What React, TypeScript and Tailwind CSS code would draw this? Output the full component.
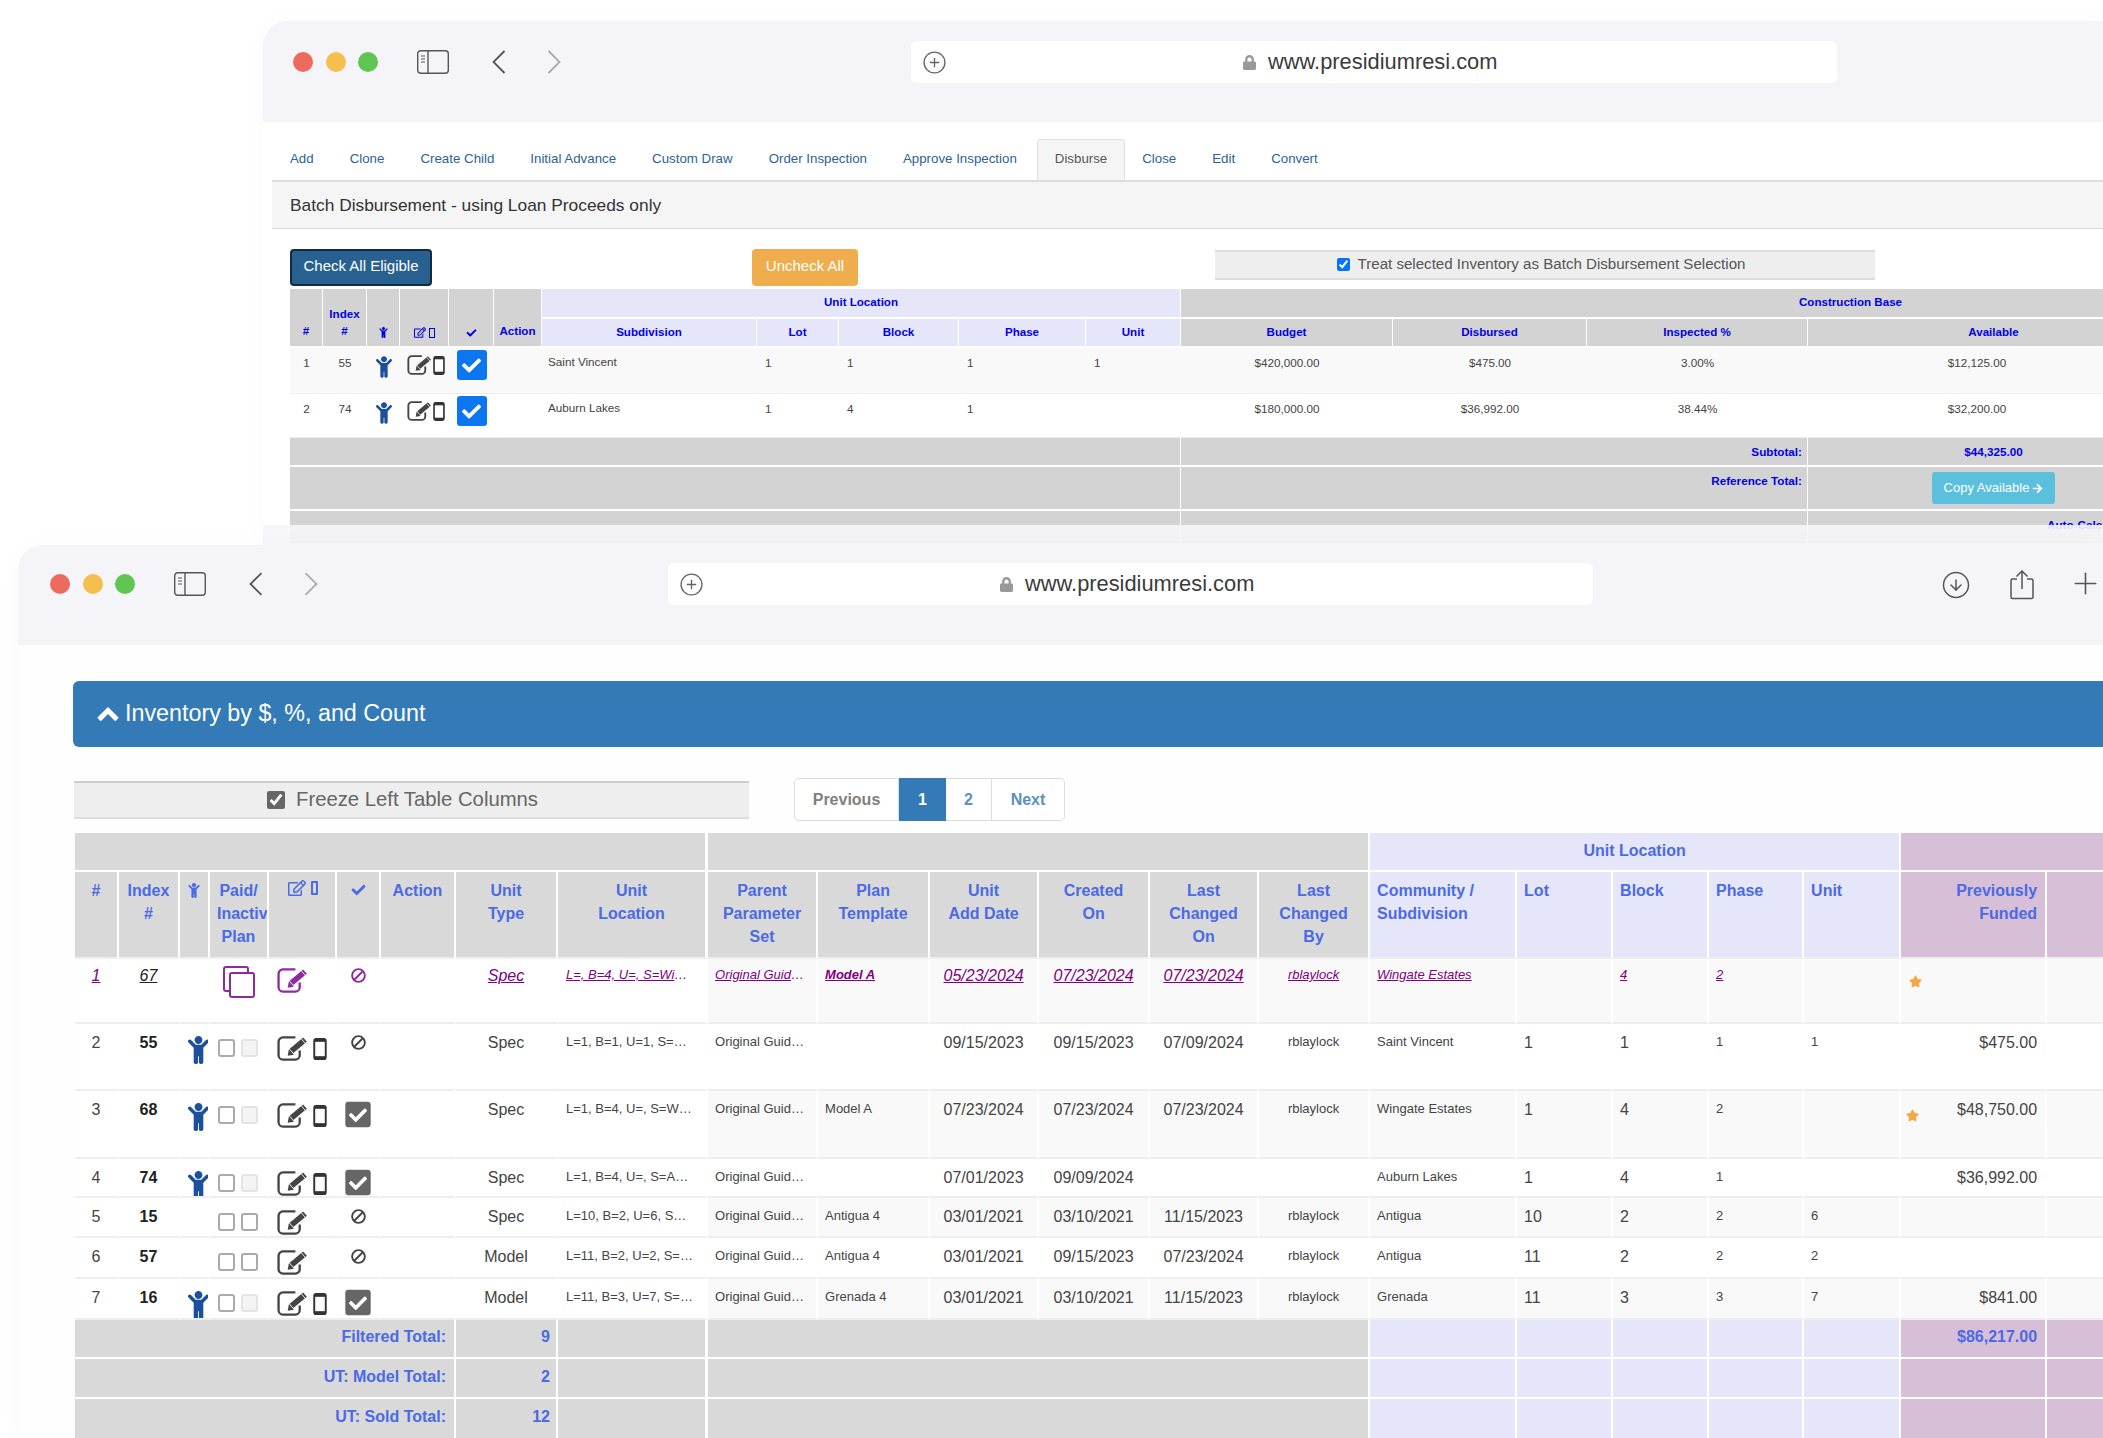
import React from "react";
import { FaArrowRight, FaBan, FaCheck, FaCheckSquare, FaChild, FaLock, FaRegEdit, FaStar } from "react-icons/fa";
import { CircleArrowDown, CirclePlus, Plus } from "lucide-react";

function Mobile({ className }: { className?: string }) {
  return (
    <svg viewBox="0 0 14 23" className={className}>
      <rect x="1" y="1" width="12" height="21" rx="2" fill="#fff" stroke="currentColor" strokeWidth="2" />
      <rect x="1" y="1" width="12" height="3" fill="currentColor" />
      <rect x="1" y="19" width="12" height="3" fill="currentColor" />
    </svg>
  );
}

function EditIcon({ className }: { className?: string }) {
  return (
    <svg viewBox="0 0 32 26" className={className} fill="none">
      <path d="M19 1.500H6A4.500 4.500 0 0 0 1.500 6v14A4.500 4.500 0 0 0 6 24.500h13a4.500 4.500 0 0 0 4.500-4.500v-5" stroke="currentColor" strokeWidth="2.400" />
      <path d="M15 15.500 29 3.800" stroke="currentColor" strokeWidth="6" />
      <path d="M25.500 3.200l3.800 4.600" stroke="#fff" strokeWidth="0.900" />
      <path d="M11 20.500l1.300-7 5.200 6z" fill="currentColor" />
    </svg>
  );
}

function CopyIcon({ className }: { className?: string }) {
  return (
    <svg viewBox="0 0 32 32" className={className} fill="none" stroke="currentColor" strokeWidth="2">
      <path d="M7 25H3a2 2 0 0 1-2-2V3a2 2 0 0 1 2-2h20a2 2 0 0 1 2 2v4" />
      <rect x="7" y="7" width="24" height="24" rx="2" />
    </svg>
  );
}

function Chrome({ front }: { front?: boolean }) {
  return (
    <div className={front ? "flex h-[100px] items-start rounded-tl-[24px] bg-[#f5f5f9] pl-[32px]" : "flex h-[101px] items-start rounded-tl-[24px] bg-[#f5f5f9] pl-[30px] pt-[2px]"}>
      <div className="mt-[29px] flex gap-[12.500px]">
        <span className="h-[20px] w-[20px] rounded-full bg-[#ec6a5e]" />
        <span className="h-[20px] w-[20px] rounded-full bg-[#f4bf4f]" />
        <span className="h-[20px] w-[20px] rounded-full bg-[#61c554]" />
      </div>
      <svg viewBox="0 0 32 24" className="ml-[39px] mt-[27px] h-[24px] w-[32px] text-[#555]" fill="none" stroke="currentColor">
        <rect x="0.7" y="0.7" width="30.6" height="22.6" rx="3" strokeWidth="1.4" />
        <path d="M11 1v22" strokeWidth="1.4" />
        <path d="M4 6h4M4 9h4M4 12h4" strokeWidth="1.2" />
      </svg>
      <svg viewBox="0 0 14 24" className="ml-[43px] mt-[27px] h-[24px] w-[14px] text-[#555]" fill="none" stroke="currentColor" strokeWidth="1.8">
        <path d="M12.5 1 1.5 12l11 11" />
      </svg>
      <svg viewBox="0 0 14 24" className="ml-[41px] mt-[27px] h-[24px] w-[14px] text-[#aaa]" fill="none" stroke="currentColor" strokeWidth="1.8">
        <path d="M1.5 1l11 11-11 11" />
      </svg>
      <div className="ml-[350px] mt-[18px] flex h-[42px] w-[926px] items-center rounded-[6px] bg-white pl-[11px]">
        <CirclePlus className="h-[25px] w-[25px] text-[#666]" strokeWidth={1.3} />
        <FaLock className="ml-[296px] h-[15px] w-[13px] text-[#999]" />
        <span className="ml-[12px] text-[21.850px] leading-[28px] text-[#3b3b3b]">www.presidiumresi.com</span>
      </div>
      {front && (
        <div className="flex items-center">
          <CircleArrowDown className="ml-[348px] mt-[23px] h-[30px] w-[30px] text-[#555]" strokeWidth={1.2} />
          <svg viewBox="0 0 24 30" className="ml-[39px] mt-[24px] h-[30px] w-[24px] text-[#555]" fill="none" stroke="currentColor" strokeWidth="1.500">
            <path d="M7 9H2.500A1.500 1.500 0 0 0 1 10.500V27a1.500 1.500 0 0 0 1.500 1.500h19A1.500 1.500 0 0 0 23 27V10.500A1.500 1.500 0 0 0 21.500 9H17M12 19V1.500M6.500 6.500 12 1l5.500 5.500" />
          </svg>
          <Plus className="ml-[34px] mt-[21px] h-[35px] w-[35px] text-[#555]" strokeWidth={1.1} />
        </div>
      )}
    </div>
  );
}

const tabs = ["Add", "Clone", "Create Child", "Initial Advance", "Custom Draw", "Order Inspection", "Approve Inspection", "Disburse", "Close", "Edit", "Convert"];

const backTh = "border-b-2 border-r border-white bg-[#d3d3d3] p-0 text-center text-[11.6px] font-bold text-[#0000e6]";
const backThL = "border-b-2 border-r border-white bg-[#e6e6fa] p-0 text-center text-[11.6px] font-bold text-[#0000e6]";
const backTd = "border-b border-[#eeeeee] p-0 align-top text-[11.7px] text-[#444]";

function BackIcons() {
  return (
    <>
      <td className={backTd}>
        <div className="flex justify-center pt-[8px]"><FaChild className="h-[22px] w-[16px] text-[#1c4f9c]" /></div>
      </td>
      <td className={backTd}>
        <div className="flex items-start gap-[1px] pl-[7px] pt-[7px]">
          <EditIcon className="h-[20px] w-[25px] text-[#444]" />
          <Mobile className="mt-[1px] h-[19px] w-[12px] text-[#333]" />
        </div>
      </td>
      <td className={backTd}>
        <div className="flex justify-center pt-[2px]">
          <span className="flex h-[30px] w-[30px] items-center justify-center rounded-[3px] bg-[#0b76ef]"><FaCheck className="h-[19px] w-[19px] text-white" /></span>
        </div>
      </td>
      <td className={backTd} />
    </>
  );
}

function BackRow({ n, idx, sub, lot, block, phase, unit, budget, disb, insp, avail, stripe, h }: { n: string; idx: string; sub: string; lot: string; block: string; phase: string; unit: string; budget: string; disb: string; insp: string; avail: string; stripe?: boolean; h: string }) {
  const row = stripe ? "bg-[#f9f9f9]" : "bg-white";
  return (
    <tr className={`${row} ${h}`}>
      <td className={`${backTd} pt-[6px] text-center`}>{n}</td>
      <td className={`${backTd} pt-[6px] text-center`}>{idx}</td>
      <BackIcons />
      <td className={`${backTd} pl-[6px] pt-[5px] text-[9.6px]`}>{sub}</td>
      <td className={`${backTd} pl-[8px] pt-[6px]`}>{lot}</td>
      <td className={`${backTd} pl-[8px] pt-[6px]`}>{block}</td>
      <td className={`${backTd} pl-[8px] pt-[6px]`}>{phase}</td>
      <td className={`${backTd} pl-[8px] pt-[6px]`}>{unit}</td>
      <td className={`${backTd} pt-[6px] text-center`}>{budget}</td>
      <td className={`${backTd} pt-[6px] text-center`}>{disb}</td>
      <td className={`${backTd} pt-[6px] text-center`}>{insp}</td>
      <td className={`${backTd} pr-[34px] pt-[6px] text-center`}>{avail}</td>
      <td className={backTd} />
    </tr>
  );
}

const backTotal = "border-b-2 border-r border-white bg-[#d3d3d3] p-0 align-top text-[11.7px] font-bold text-[#0000e6]";

function BackWindow() {
  return (
    <section className="absolute left-[263px] top-[21px] h-[524px] w-[1840px] overflow-hidden rounded-tl-[24px] bg-white shadow-[0_0_24px_rgba(0,0,0,0.025)]">
      <Chrome />
      <nav className="ml-[9px] flex h-[60px] items-end border-b-2 border-[#dddddd] pt-[17px]">
        {tabs.map((t) => (
          <span
            key={t}
            className={
              t === "Disburse"
                ? "ml-[2px] mr-[-1px] flex h-[41px] items-center rounded-t-[4px] border border-b-0 border-[#e2e2e2] bg-[#f5f5f5] px-[17px] pb-[2px] text-[13.3px] text-[#555]"
                : "flex h-[41px] items-center px-[18px] pb-[2px] text-[13.3px] text-[#2f6294]"
            }
          >
            {t}
          </span>
        ))}
      </nav>
      <div className="ml-[9px] flex h-[47px] items-center border-b border-[#dddddd] bg-[#f5f5f5] pl-[18px] text-[17.350px] text-[#333]">
        Batch Disbursement - using Loan Proceeds only
      </div>
      <div className="ml-[27px] mt-[20px] flex items-start">
        <button className="h-[37px] w-[142px] rounded-[4px] border-2 border-[#122b40] bg-[#286090] pb-[2px] text-[15px] text-white">Check All Eligible</button>
        <button className="ml-[320px] h-[37px] w-[106px] rounded-[4px] bg-[#f0ad4e] pb-[2px] text-[15px] text-[#fff]">Uncheck All</button>
        <label className="ml-[357px] mt-[1px] flex h-[30px] w-[660px] items-center justify-center gap-[8px] border-y-2 border-[#dddddd] bg-[#eeeeee] pb-[2px] pr-[8px] text-[15.100px] text-[#555]">
          <input type="checkbox" defaultChecked className="h-[13px] w-[13px]" />
          Treat selected Inventory as Batch Disbursement Selection
        </label>
      </div>
      <table className="ml-[27px] mt-[3px] w-[1900px] table-fixed border-separate border-spacing-0">
        <colgroup>
          <col className="w-[33px]" /><col className="w-[44px]" /><col className="w-[33px]" /><col className="w-[49px]" /><col className="w-[45px]" /><col className="w-[48px]" />
          <col className="w-[215px]" /><col className="w-[82px]" /><col className="w-[120px]" /><col className="w-[127px]" /><col className="w-[95px]" />
          <col className="w-[212px]" /><col className="w-[194px]" /><col className="w-[221px]" /><col className="w-[372px]" /><col className="w-[341px]" />
        </colgroup>
        <thead>
          <tr className="h-[30px]">
            <th rowSpan={2} className={`${backTh} pb-[7px] align-bottom`}>#</th>
            <th rowSpan={2} className={`${backTh} pb-[7px] align-bottom leading-[17px]`}>Index<br />#</th>
            <th rowSpan={2} className={`${backTh} pb-[8px] align-bottom`}><FaChild className="mx-auto h-[11px] w-[9px]" /></th>
            <th rowSpan={2} className={`${backTh} pb-[8px] align-bottom`}>
              <span className="flex items-center justify-center gap-[3px]"><FaRegEdit className="h-[11px] w-[12px]" /><span className="h-[10px] w-[6px] border border-[#0000e6]" /></span>
            </th>
            <th rowSpan={2} className={`${backTh} pb-[8px] align-bottom`}><FaCheck className="mx-auto h-[10px] w-[11px]" /></th>
            <th rowSpan={2} className={`${backTh} pb-[7px] align-bottom`}>Action</th>
            <th colSpan={5} className={`${backThL} pb-[3px]`}>Unit Location</th>
            <th colSpan={5} className={`${backTh} pb-[3px]`}>Construction Base</th>
          </tr>
          <tr className="h-[29px]">
            <th className={`${backThL} pb-[2px]`}>Subdivision</th>
            <th className={`${backThL} pb-[2px]`}>Lot</th>
            <th className={`${backThL} pb-[2px]`}>Block</th>
            <th className={`${backThL} pb-[2px]`}>Phase</th>
            <th className={`${backThL} pb-[2px]`}>Unit</th>
            <th className={`${backTh} pb-[2px]`}>Budget</th>
            <th className={`${backTh} pb-[2px]`}>Disbursed</th>
            <th className={`${backTh} pb-[2px]`}>Inspected %</th>
            <th className={`${backTh} pb-[2px]`}>Available</th>
            <th className={backTh} />
          </tr>
        </thead>
        <tbody>
          <BackRow stripe h="h-[46px]" n="1" idx="55" sub="Saint Vincent" lot="1" block="1" phase="1" unit="1" budget="$420,000.00" disb="$475.00" insp="3.00%" avail="$12,125.00" />
          <BackRow h="h-[44px]" n="2" idx="74" sub="Auburn Lakes" lot="1" block="4" phase="1" unit="" budget="$180,000.00" disb="$36,992.00" insp="38.44%" avail="$32,200.00" />
          <tr className="h-[29px]">
            <td colSpan={11} className={backTotal} />
            <td colSpan={3} className={`${backTotal} pr-[5px] pt-[5px] text-right`}>Subtotal:</td>
            <td className={`${backTotal} pt-[5px] text-center`}>$44,325.00</td>
            <td className={backTotal} />
          </tr>
          <tr className="h-[44px]">
            <td colSpan={11} className={backTotal} />
            <td colSpan={3} className={`${backTotal} pr-[5px] pt-[5px] text-right`}>Reference Total:</td>
            <td className={`${backTotal} pt-[5px]`}>
              <span className="mx-auto flex h-[32px] w-[123px] items-center justify-center gap-[3px] rounded-[3px] bg-[#5bc0de] text-[13px] font-normal text-white">
                Copy Available <FaArrowRight className="h-[11px] w-[11px]" />
              </span>
            </td>
            <td className={backTotal} />
          </tr>
          <tr className="h-[34px]">
            <td colSpan={11} className={backTotal} />
            <td colSpan={3} className={backTotal} />
            <td className={`${backTotal} pl-[239px] pt-[5px] whitespace-nowrap`}>Auto-Calc</td>
            <td className={backTotal} />
          </tr>
        </tbody>
      </table>
      <div className="absolute inset-x-0 bottom-0 h-[20px] bg-[#f6f6f9]/90" />
    </section>
  );
}

type Row = {
  n: string; idx: string; child?: boolean; box2?: boolean; mobile?: boolean; checked?: boolean; type: string; loc: string; plan?: string;
  add: string; created: string; changed?: string; by?: string; comm: string; lot?: string; block: string; phase: string; unit?: string; prev?: string; star?: boolean; h: string; stripe?: boolean;
};

const rows: Row[] = [
  { n: "2", idx: "55", child: true, mobile: true, type: "Spec", loc: "L=1, B=1, U=1, S=Saint Vincent", add: "09/15/2023", created: "09/15/2023", changed: "07/09/2024", by: "rblaylock", comm: "Saint Vincent", lot: "1", block: "1", phase: "1", unit: "1", prev: "$475.00", h: "h-[65px]" },
  { n: "3", idx: "68", child: true, mobile: true, checked: true, type: "Spec", loc: "L=1, B=4, U=, S=Wingate Estates", plan: "Model A", add: "07/23/2024", created: "07/23/2024", changed: "07/23/2024", by: "rblaylock", comm: "Wingate Estates", lot: "1", block: "4", phase: "2", prev: "$48,750.00", star: true, h: "h-[66px]", stripe: true },
  { n: "4", idx: "74", child: true, mobile: true, checked: true, type: "Spec", loc: "L=1, B=4, U=, S=Auburn Lakes", add: "07/01/2023", created: "09/09/2024", comm: "Auburn Lakes", lot: "1", block: "4", phase: "1", prev: "$36,992.00", h: "h-[37px]" },
  { n: "5", idx: "15", box2: true, type: "Spec", loc: "L=10, B=2, U=6, S=Antigua", plan: "Antigua 4", add: "03/01/2021", created: "03/10/2021", changed: "11/15/2023", by: "rblaylock", comm: "Antigua", lot: "10", block: "2", phase: "2", unit: "6", h: "h-[38px]", stripe: true },
  { n: "6", idx: "57", box2: true, type: "Model", loc: "L=11, B=2, U=2, S=Antigua", plan: "Antigua 4", add: "03/01/2021", created: "09/15/2023", changed: "07/23/2024", by: "rblaylock", comm: "Antigua", lot: "11", block: "2", phase: "2", unit: "2", h: "h-[39px]" },
  { n: "7", idx: "16", child: true, mobile: true, checked: true, type: "Model", loc: "L=11, B=3, U=7, S=Grenada", plan: "Grenada 4", add: "03/01/2021", created: "03/10/2021", changed: "11/15/2023", by: "rblaylock", comm: "Grenada", lot: "11", block: "3", phase: "3", unit: "7", prev: "$841.00", h: "h-[39px]", stripe: true },
];

const frontTh = "border-b-2 border-r-2 border-b-[#eeeeee] border-r-white bg-[#d9d9d9] p-0 align-top text-[16px] font-bold leading-[23px] text-[#4a6ae6]";
const frontThL = "border-b-2 border-r-2 border-b-[#eeeeee] border-r-white bg-[#e6e6fa] p-0 align-top text-[16px] font-bold leading-[23px] text-[#4a6ae6]";
const frontThP = "border-b-2 border-r-2 border-b-[#eeeeee] border-r-white bg-[#d8bfd8] p-0 align-top text-[16px] font-bold leading-[23px] text-[#4a6ae6]";
const td = "border-b-2 border-r-2 border-b-[#eeeeee] border-r-white p-0 align-top text-[#444]";

function Cell({ h, bg, className, children }: { h: string; bg?: string; className?: string; children?: React.ReactNode }) {
  return (
    <td className={`${td} ${bg ?? ""}`}>
      <div className={`overflow-hidden ${h} ${className ?? ""}`}>{children}</div>
    </td>
  );
}

const lg = "pt-[8px] text-[16px] leading-[22px]";
const sm = "pt-[9px] text-[13px] leading-[18px]";

function DataRow({ r }: { r: Row }) {
  const s = r.stripe ? "bg-[#f9f9f9]" : "bg-white";
  return (
    <tr>
      <Cell h={r.h} bg="bg-white" className={`${lg} text-center`}>{r.n}</Cell>
      <Cell h={r.h} bg="bg-white" className={`${lg} text-center font-bold text-[#222]`}>{r.idx}</Cell>
      <Cell h={r.h} bg="bg-white" className="pl-[8px] pt-[12px]">{r.child && <FaChild className="h-[28px] w-[21px] text-[#1c4f9c]" />}</Cell>
      <Cell h={r.h} bg="bg-white" className="flex items-start gap-[6px] pl-[8px] pt-[15px]">
        <span className="h-[18px] w-[17px] rounded-[3px] border-2 border-[#aaaaaa] bg-white" />
        <span className={r.box2 ? "h-[18px] w-[17px] rounded-[3px] border-2 border-[#aaaaaa] bg-white" : "h-[18px] w-[17px] rounded-[3px] border-2 border-[#e4e4e4] bg-[#f4f4f4]"} />
      </Cell>
      <Cell h={r.h} bg="bg-white" className="flex items-start gap-[5px] pl-[8px] pt-[12px]">
        <EditIcon className="h-[25px] w-[31px] text-[#444]" />
        {r.mobile && <Mobile className="mt-[2px] h-[22px] w-[14px] text-[#333]" />}
      </Cell>
      <Cell h={r.h} bg="bg-white" className={r.checked ? "flex justify-center pt-[9px]" : "flex justify-center pt-[11px]"}>
        {r.checked ? <FaCheckSquare className="h-[29px] w-[26px] text-[#666]" /> : <FaBan className="h-[15px] w-[15px] -scale-x-100 text-[#444]" />}
      </Cell>
      <Cell h={r.h} bg="bg-white" />
      <Cell h={r.h} bg="bg-white" className={`${lg} text-center`}>{r.type}</Cell>
      <td className={`${td} border-r-[3px] bg-white`}><div className={`${r.h} ${sm} truncate pl-[8px] pr-[12px]`}>{r.loc}</div></td>
      <Cell h={r.h} bg={s} className={`${sm} truncate px-[7px]`}>Original Guidelines</Cell>
      <Cell h={r.h} bg={s} className={`${sm} px-[7px]`}>{r.plan}</Cell>
      <Cell h={r.h} bg={s} className={`${lg} text-center`}>{r.add}</Cell>
      <Cell h={r.h} bg={s} className={`${lg} text-center`}>{r.created}</Cell>
      <Cell h={r.h} bg={s} className={`${lg} text-center`}>{r.changed}</Cell>
      <Cell h={r.h} bg={s} className={`${sm} text-center`}>{r.by}</Cell>
      <Cell h={r.h} bg={s} className={`${sm} pl-[7px]`}>{r.comm}</Cell>
      <Cell h={r.h} bg={s} className={`${lg} pl-[7px]`}>{r.lot}</Cell>
      <Cell h={r.h} bg={s} className={`${lg} pl-[7px]`}>{r.block}</Cell>
      <Cell h={r.h} bg={s} className={`${sm} pl-[7px]`}>{r.phase}</Cell>
      <Cell h={r.h} bg={s} className={`${sm} pl-[7px]`}>{r.unit}</Cell>
      <Cell h={r.h} bg={s} className={`${lg} flex justify-between pl-[5px] pr-[8px]`}>
        <span>{r.star && <FaStar className="mt-[10px] h-[13px] w-[13px] text-[#f5a742]" />}</span>
        <span>{r.prev}</span>
      </Cell>
      <Cell h={r.h} bg={s} />
    </tr>
  );
}

function LinkRow() {
  const h = "h-[63px]";
  const link = "italic underline text-[#800080]";
  const s = "bg-[#f9f9f9]";
  return (
    <tr>
      <Cell h={h} bg="bg-white" className="pt-[6px] text-center text-[16px] leading-[22px]"><span className={link}>1</span></Cell>
      <Cell h={h} bg="bg-white" className="pt-[6px] text-center text-[16px] leading-[22px] italic underline text-[#222]">67</Cell>
      <Cell h={h} bg="bg-white" />
      <Cell h={h} bg="bg-white" className="pl-[13px] pt-[7px]"><CopyIcon className="h-[32px] w-[32px] text-[#8e2a9e]" /></Cell>
      <Cell h={h} bg="bg-white" className="pl-[8px] pt-[9px]"><EditIcon className="h-[25px] w-[31px] text-[#8e2a9e]" /></Cell>
      <Cell h={h} bg="bg-white" className="flex justify-center pt-[9px]"><FaBan className="h-[15px] w-[15px] -scale-x-100 text-[#8e2a9e]" /></Cell>
      <Cell h={h} bg="bg-white" />
      <Cell h={h} bg="bg-white" className="pt-[6px] text-center text-[16px] leading-[22px]"><span className={link}>Spec</span></Cell>
      <td className={`${td} border-r-[3px] bg-white`}><div className={`${h} truncate pl-[8px] pr-[12px] pt-[7px] text-[13px] leading-[18px] ${link}`}>L=, B=4, U=, S=Wingate Estates</div></td>
      <Cell h={h} bg={s} className={`truncate px-[7px] pt-[7px] text-[13px] leading-[18px] ${link}`}>Original Guidelines</Cell>
      <Cell h={h} bg={s} className={`px-[7px] pt-[7px] text-[13px] font-bold leading-[18px] ${link}`}>Model A</Cell>
      <Cell h={h} bg={s} className="pt-[6px] text-center text-[16px] leading-[22px]"><span className={link}>05/23/2024</span></Cell>
      <Cell h={h} bg={s} className="pt-[6px] text-center text-[16px] leading-[22px]"><span className={link}>07/23/2024</span></Cell>
      <Cell h={h} bg={s} className="pt-[6px] text-center text-[16px] leading-[22px]"><span className={link}>07/23/2024</span></Cell>
      <Cell h={h} bg={s} className="pt-[7px] text-center text-[13px] leading-[18px]"><span className={link}>rblaylock</span></Cell>
      <Cell h={h} bg={s} className="pl-[7px] pt-[7px] text-[13px] leading-[18px]"><span className={link}>Wingate Estates</span></Cell>
      <Cell h={h} bg={s} />
      <Cell h={h} bg={s} className="pl-[7px] pt-[7px] text-[13px] leading-[18px]"><span className={link}>4</span></Cell>
      <Cell h={h} bg={s} className="pl-[7px] pt-[7px] text-[13px] leading-[18px]"><span className={link}>2</span></Cell>
      <Cell h={h} bg={s} />
      <Cell h={h} bg={s} className="pl-[8px] pt-[16px]"><FaStar className="h-[13px] w-[13px] text-[#f5a742]" /></Cell>
      <Cell h={h} bg={s} />
    </tr>
  );
}

const totalG = "border-b-2 border-r-2 border-white bg-[#d9d9d9] p-0 align-top text-[16px] font-bold leading-[22px] text-[#4a6ae6]";
const totalL = "border-b-2 border-r-2 border-white bg-[#e6e6fa] p-0";
const totalP = "border-b-2 border-r-2 border-white bg-[#d8bfd8] p-0 align-top text-[16px] font-bold leading-[22px] text-[#4a6ae6]";

function TotalRow({ label, value, money, h, pt }: { label: string; value: string; money?: string; h: string; pt: string }) {
  return (
    <tr className={h}>
      <td colSpan={7} className={`${totalG} ${pt} pr-[8px] text-right`}>{label}</td>
      <td className={`${totalG} ${pt} pr-[6px] text-right`}>{value}</td>
      <td className={`${totalG} border-r-[3px]`} />
      <td colSpan={6} className={totalG} />
      <td className={totalL} /><td className={totalL} /><td className={totalL} /><td className={totalL} /><td className={totalL} />
      <td className={`${totalP} ${pt} pr-[8px] text-right`}>{money}</td>
      <td className={totalP} />
    </tr>
  );
}

function FrontWindow() {
  return (
    <section className="absolute left-[18px] top-[545px] h-[893px] w-[2085px] overflow-hidden rounded-tl-[24px] bg-[#fefefe] shadow-[0_0_24px_rgba(0,0,0,0.025)]">
      <Chrome front />
      <div className="ml-[55px] mt-[36px] flex h-[66px] items-center rounded-l-[6px] bg-[#337ab7] pb-[2px] pl-[24px] text-[23.300px] text-white">
        <svg viewBox="0 0 22 17" className="mr-[6px] h-[17px] w-[22px]" fill="none" stroke="currentColor" strokeWidth="5">
          <path d="M2 14.500 11 5.500l9 9" />
        </svg>
        Inventory by $, %, and Count
      </div>
      <div className="ml-[56px] mt-[31px] flex items-center">
        <label className="flex h-[38px] w-[675px] items-center justify-center gap-[11px] border-b-2 border-t-2 border-b-[#dddddd] border-t-[#cccccc] bg-[#eeeeee] pr-[18px] text-[20.300px] text-[#666]">
          <input type="checkbox" defaultChecked className="h-[18px] w-[18px] accent-[#666666]" />
          Freeze Left Table Columns
        </label>
        <div className="ml-[45px] flex h-[43px] text-[16px] font-bold">
          <span className="flex w-[105px] items-center justify-center rounded-l-[5px] border border-[#dddddd] bg-white text-[#808080]">Previous</span>
          <span className="flex w-[47px] items-center justify-center border border-[#337ab7] bg-[#337ab7] text-white">1</span>
          <span className="flex w-[46px] items-center justify-center border border-l-0 border-[#dddddd] bg-white text-[#5a90c2]">2</span>
          <span className="flex w-[73px] items-center justify-center rounded-r-[5px] border border-l-0 border-[#dddddd] bg-white text-[#5a90c2]">Next</span>
        </div>
      </div>
      <table className="ml-[57px] mt-[12px] w-[2122px] table-fixed border-separate border-spacing-0">
        <colgroup>
          <col className="w-[44px]" /><col className="w-[61px]" /><col className="w-[30px]" /><col className="w-[59px]" /><col className="w-[68px]" /><col className="w-[44px]" /><col className="w-[75px]" /><col className="w-[102px]" /><col className="w-[150px]" />
          <col className="w-[110px]" /><col className="w-[112px]" /><col className="w-[109px]" /><col className="w-[111px]" /><col className="w-[109px]" /><col className="w-[111px]" />
          <col className="w-[147px]" /><col className="w-[96px]" /><col className="w-[96px]" /><col className="w-[95px]" /><col className="w-[97px]" />
          <col className="w-[146px]" /><col className="w-[150px]" />
        </colgroup>
        <thead>
          <tr className="h-[39px]">
            <th colSpan={9} className="border-b-2 border-r-[3px] border-b-white border-r-white bg-[#d9d9d9] p-0" />
            <th colSpan={6} className="border-b-2 border-r-2 border-white bg-[#d9d9d9] p-0" />
            <th colSpan={5} className="border-b-2 border-r-2 border-white bg-[#e6e6fa] p-0 pb-[2px] text-center align-middle text-[16px] font-bold text-[#4a6ae6]">Unit Location</th>
            <th colSpan={2} className="border-b-2 border-white bg-[#d8bfd8] p-0" />
          </tr>
          <tr className="h-[87px]">
            <th className={`${frontTh} pt-[7px] text-center`}>#</th>
            <th className={`${frontTh} pt-[7px] text-center`}>Index<br />#</th>
            <th className={`${frontTh} pt-[11px]`}><FaChild className="mx-auto h-[15px] w-[12px]" /></th>
            <th className={`${frontTh} pt-[7px] text-center`}>
              <div className="overflow-hidden">Paid/<span className="block whitespace-nowrap pl-[7px] text-left">Inactive</span>Plan</div>
            </th>
            <th className={`${frontTh} pl-[19px] pt-[8px]`}>
              <span className="flex items-center gap-[5px]"><FaRegEdit className="h-[16px] w-[18px]" /><span className="h-[14px] w-[7px] rounded-[1px] border-2 border-[#4a6ae6]" /></span>
            </th>
            <th className={`${frontTh} pt-[11px]`}><FaCheck className="mx-auto h-[14px] w-[15px]" /></th>
            <th className={`${frontTh} pt-[7px] text-center`}>Action</th>
            <th className={`${frontTh} pt-[7px] text-center`}>Unit<br />Type</th>
            <th className={`${frontTh} border-r-[3px] pt-[7px] text-center`}>Unit<br />Location</th>
            <th className={`${frontTh} pt-[7px] text-center`}>Parent<br />Parameter<br />Set</th>
            <th className={`${frontTh} pt-[7px] text-center`}>Plan<br />Template</th>
            <th className={`${frontTh} pt-[7px] text-center`}>Unit<br />Add Date</th>
            <th className={`${frontTh} pt-[7px] text-center`}>Created<br />On</th>
            <th className={`${frontTh} pt-[7px] text-center`}>Last<br />Changed<br />On</th>
            <th className={`${frontTh} pt-[7px] text-center`}>Last<br />Changed<br />By</th>
            <th className={`${frontThL} pl-[7px] pt-[7px] text-left`}>Community /<br />Subdivision</th>
            <th className={`${frontThL} pl-[7px] pt-[7px] text-left`}>Lot</th>
            <th className={`${frontThL} pl-[7px] pt-[7px] text-left`}>Block</th>
            <th className={`${frontThL} pl-[7px] pt-[7px] text-left`}>Phase</th>
            <th className={`${frontThL} pl-[7px] pt-[7px] text-left`}>Unit</th>
            <th className={`${frontThP} pr-[8px] pt-[7px] text-right`}>Previously<br />Funded</th>
            <th className={frontThP} />
          </tr>
        </thead>
        <tbody>
          <LinkRow />
          {rows.map((r) => <DataRow key={r.n} r={r} />)}
          <TotalRow label="Filtered Total:" value="9" money="$86,217.00" h="h-[39px]" pt="pt-[6px]" />
          <TotalRow label="UT: Model Total:" value="2" h="h-[40px]" pt="pt-[7px]" />
          <TotalRow label="UT: Sold Total:" value="12" h="h-[41px]" pt="pt-[7px]" />
        </tbody>
      </table>
    </section>
  );
}

export default function App() {
  return (
    <main className="relative h-[1438px] w-[2103px] overflow-hidden bg-white font-['Liberation_Sans',Arial,sans-serif]">
      <BackWindow />
      <FrontWindow />
    </main>
  );
}
